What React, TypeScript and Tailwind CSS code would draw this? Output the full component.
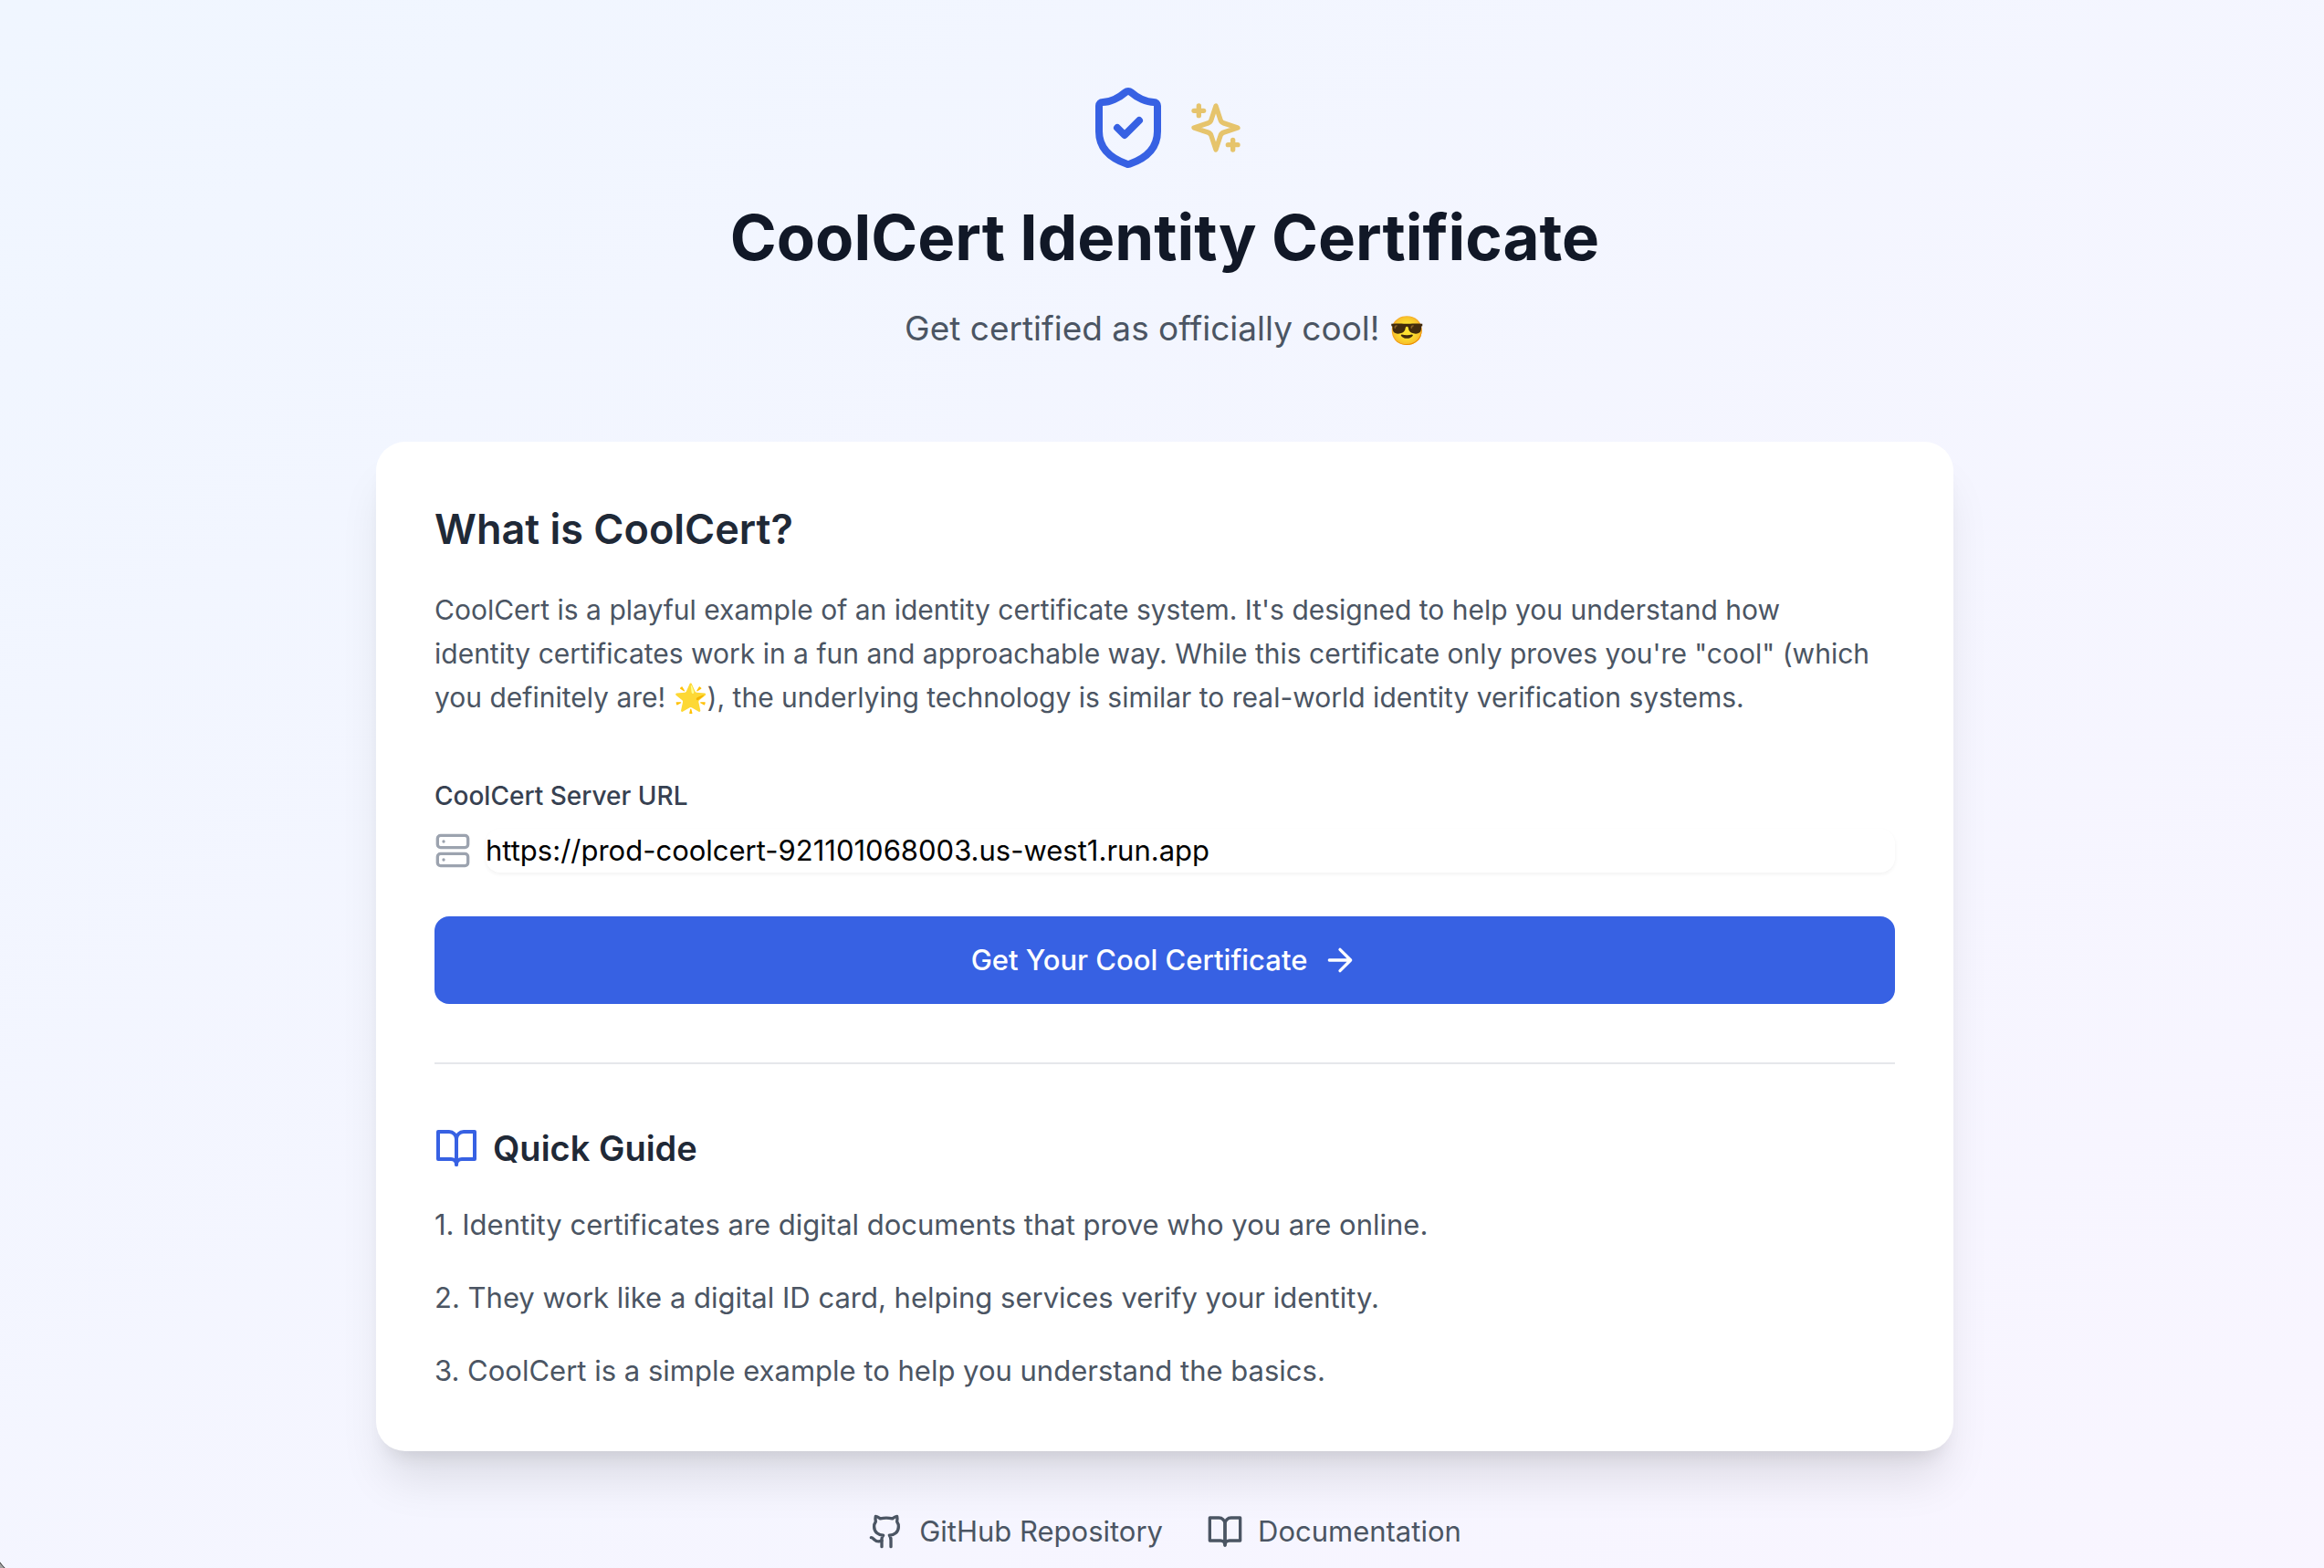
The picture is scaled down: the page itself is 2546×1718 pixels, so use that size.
import React from "react";

type IconProps = { className?: string; children: React.ReactNode };

function Icon({ className, children }: IconProps) {
  return (
    <svg viewBox="0 0 24 24" fill="none" stroke="currentColor" strokeWidth={2} strokeLinecap="round" strokeLinejoin="round" className={className} aria-hidden="true">
      {children}
    </svg>
  );
}

function BookIcon({ className }: { className: string }) {
  return (
    <Icon className={className}>
      <path d="M2 3h6a4 4 0 0 1 4 4v14a3 3 0 0 0-3-3H2z" />
      <path d="M22 3h-6a4 4 0 0 0-4 4v14a3 3 0 0 1 3-3h7z" />
    </Icon>
  );
}

const steps = [
  "1. Identity certificates are digital documents that prove who you are online.",
  "2. They work like a digital ID card, helping services verify your identity.",
  "3. CoolCert is a simple example to help you understand the basics.",
];

export default function App() {
  return (
    <div className="min-h-screen bg-linear-to-br/srgb from-[#f0f6ff] to-[#f9f5ff] to-105% pt-[92px] pl-[6px] font-['Inter',sans-serif] text-[31px] leading-[48px] text-[#4b5563]">
      <main className="mx-auto max-w-[1728px]">
        <header className="flex flex-col items-center text-center">
          <div className="flex items-center justify-center gap-4">
            <Icon className="size-24 text-[#3761e3]">
              <path d="M20 13c0 5-3.5 7.5-7.66 8.95a1 1 0 0 1-.67-.01C7.5 20.5 4 18 4 13V6a1 1 0 0 1 1-1c2 0 4.5-1.2 6.24-2.72a1.17 1.17 0 0 1 1.52 0C14.51 3.81 17 5 19 5a1 1 0 0 1 1 1z" />
              <path d="m9 12 2 2 4-4" />
            </Icon>
            <Icon className="size-16 text-[#e6c46c]">
              <path d="m12 3-1.912 5.813a2 2 0 0 1-1.275 1.275L3 12l5.813 1.912a2 2 0 0 1 1.275 1.275L12 21l1.912-5.813a2 2 0 0 1 1.275-1.275L21 12l-5.813-1.912a2 2 0 0 1-1.275-1.275L12 3Z" />
              <path d="M5 3v4M19 17v4M3 5h4M17 19h4" />
            </Icon>
          </div>
          <h1 className="mt-8 text-[69px] leading-[80px] font-bold text-[#111827]">CoolCert Identity Certificate</h1>
          <p className="mt-8 text-[37px] leading-[56px]">
            Get certified as officially cool! <span className="text-[31px] leading-none">😎</span>
          </p>
        </header>

        <section className="mt-24 rounded-[32px] bg-white p-16 shadow-[0_40px_50px_-10px_rgba(0,0,0,0.1),0_16px_20px_-12px_rgba(0,0,0,0.1)]">
          <h2 className="text-[45px] leading-[64px] font-semibold text-[#1f2937]">What is CoolCert?</h2>
          <p className="mt-8 text-[30px]">
            CoolCert is a playful example of an identity certificate system. It's designed to help you understand how
            <br />
            identity certificates work in a fun and approachable way. While this certificate only proves you're "cool" (which you definitely are! 🌟), the underlying technology is similar to real-world identity verification systems.
          </p>
          <label htmlFor="server-url" className="mt-16 block text-[28px] leading-[40px] font-medium text-[#374151]">CoolCert Server URL</label>
          <div className="mt-4 flex items-center gap-4">
            <Icon className="size-10 shrink-0 text-[#9ca3af]">
              <rect width="20" height="8" x="2" y="2" rx="2" />
              <rect width="20" height="8" x="2" y="14" rx="2" />
              <path d="M6 6h.01M6 18h.01" />
            </Icon>
            <input id="server-url" type="url" defaultValue="https://prod-coolcert-921101068003.us-west1.run.app" className="h-12 min-w-0 flex-1 rounded-2xl bg-white text-black shadow-[0_2px_4px_rgba(0,0,0,0.05)] outline-none" />
          </div>
          <button type="button" className="mt-12 flex h-24 w-full items-center justify-center gap-4 rounded-2xl bg-[#3761e3] font-medium text-white">
            Get Your Cool Certificate
            <Icon className="size-10">
              <path d="M5 12h14M12 5l7 7-7 7" />
            </Icon>
          </button>
          <div className="mt-16 border-t-2 border-[#e5e7eb] pt-16">
            <h3 className="flex items-center gap-4 text-[38px] leading-[56px] font-semibold text-[#1f2937]">
              <BookIcon className="size-12 text-[#3761e3]" />
              Quick Guide
            </h3>
            <div className="mt-8 flex flex-col gap-8">
              {steps.map((step) => (
                <p key={step}>{step}</p>
              ))}
            </div>
          </div>
        </section>

        <footer className="mt-16 flex justify-center gap-12">
          <a href="#github" className="flex items-center gap-4">
            <Icon className="size-10">
              <path d="M15 22v-4a4.8 4.8 0 0 0-1-3.5c3 0 6-2 6-5.5.08-1.25-.27-2.48-1-3.5.28-1.15.28-2.35 0-3.5 0 0-1 0-3 1.5-2.64-.5-5.36-.5-8 0C6 2 5 2 5 2c-.3 1.15-.3 2.35 0 3.5A5.403 5.403 0 0 0 4 9c0 3.5 3 5.5 6 5.5-.39.49-.68 1.05-.85 1.65-.17.6-.22 1.23-.15 1.85v4" />
              <path d="M9 18c-4.51 2-5-2-7-2" />
            </Icon>
            GitHub Repository
          </a>
          <a href="#docs" className="flex items-center gap-4">
            <BookIcon className="size-10" />
            Documentation
          </a>
        </footer>
      </main>
      <svg viewBox="0 0 6 7" className="fixed bottom-0 left-0 h-[7px] w-[6px]" aria-hidden="true">
        <path d="M0 0Q2 4 6 7H0Z" fill="#a3a3a3" />
        <path d="M0 1Q2 4 5 7" fill="none" stroke="#404040" />
      </svg>
    </div>
  );
}
